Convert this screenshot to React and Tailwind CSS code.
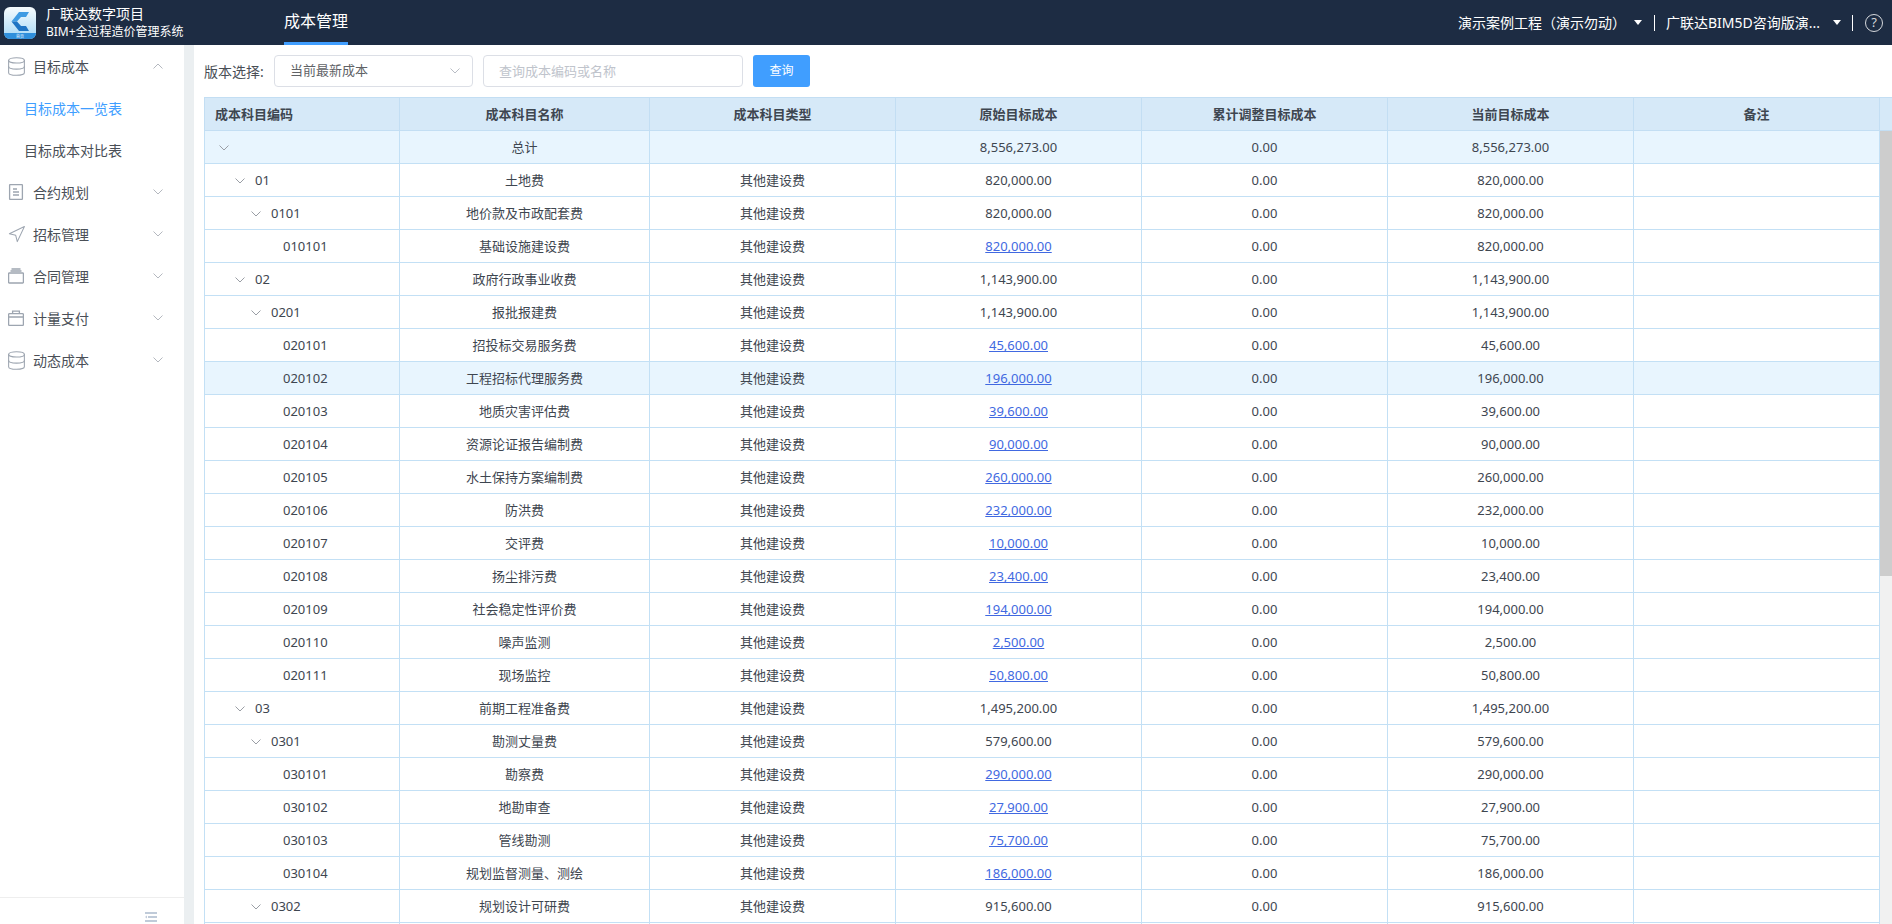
import React from 'react';
import { Database, Navigation } from 'lucide-react';

const rows = [
  { level: 0, code: '', name: '总计', type: '', orig: '8,556,273.00', parent: true },
  { level: 1, code: '01', name: '土地费', orig: '820,000.00', parent: true },
  { level: 2, code: '0101', name: '地价款及市政配套费', orig: '820,000.00', parent: true },
  { level: 3, code: '010101', name: '基础设施建设费', orig: '820,000.00', link: true },
  { level: 1, code: '02', name: '政府行政事业收费', orig: '1,143,900.00', parent: true },
  { level: 2, code: '0201', name: '报批报建费', orig: '1,143,900.00', parent: true },
  { level: 3, code: '020101', name: '招投标交易服务费', orig: '45,600.00', link: true },
  { level: 3, code: '020102', name: '工程招标代理服务费', orig: '196,000.00', link: true },
  { level: 3, code: '020103', name: '地质灾害评估费', orig: '39,600.00', link: true },
  { level: 3, code: '020104', name: '资源论证报告编制费', orig: '90,000.00', link: true },
  { level: 3, code: '020105', name: '水土保持方案编制费', orig: '260,000.00', link: true },
  { level: 3, code: '020106', name: '防洪费', orig: '232,000.00', link: true },
  { level: 3, code: '020107', name: '交评费', orig: '10,000.00', link: true },
  { level: 3, code: '020108', name: '扬尘排污费', orig: '23,400.00', link: true },
  { level: 3, code: '020109', name: '社会稳定性评价费', orig: '194,000.00', link: true },
  { level: 3, code: '020110', name: '噪声监测', orig: '2,500.00', link: true },
  { level: 3, code: '020111', name: '现场监控', orig: '50,800.00', link: true },
  { level: 1, code: '03', name: '前期工程准备费', orig: '1,495,200.00', parent: true },
  { level: 2, code: '0301', name: '勘测丈量费', orig: '579,600.00', parent: true },
  { level: 3, code: '030101', name: '勘察费', orig: '290,000.00', link: true },
  { level: 3, code: '030102', name: '地勘审查', orig: '27,900.00', link: true },
  { level: 3, code: '030103', name: '管线勘测', orig: '75,700.00', link: true },
  { level: 3, code: '030104', name: '规划监督测量、测绘', orig: '186,000.00', link: true },
  { level: 2, code: '0302', name: '规划设计可研费', orig: '915,600.00', parent: true },
];

const paddings = ['pl-[14px]', 'pl-[30px]', 'pl-[46px]', 'pl-[78px]'];

const Chevron = ({ up, className }) => (
  <svg width="10" height="6" viewBox="0 0 10 6" fill="none" className={className}>
    <path d={up ? 'M.5 5.5 5 1l4.5 4.5' : 'M.5.5 5 5 9.5.5'} stroke="currentColor" strokeWidth="1" />
  </svg>
);

const Caret = ({ className }) => (
  <span className={`block w-0 h-0 border-x-[4.5px] border-x-transparent border-t-[5px] border-t-white ${className}`} />
);

const DocIcon = () => (
  <svg width="16" height="16" viewBox="0 0 16 16" fill="none" stroke="#9da5b0" strokeWidth="1.3">
    <rect x="1.6" y=".6" width="12.8" height="14.8" rx=".6" />
    <path d="M5 5h4M5 8h6M5 11h6" />
  </svg>
);

const TrayIcon = () => (
  <svg width="16" height="16" viewBox="0 0 16 16" fill="none" stroke="#9da5b0" strokeWidth="1.3">
    <rect x=".6" y="5" width="14.8" height="10" rx=".6" />
    <path d="M2.5 3h11M3.5 1h9" />
  </svg>
);

const CaseIcon = () => (
  <svg width="16" height="16" viewBox="0 0 16 16" fill="none" stroke="#9da5b0" strokeWidth="1.3">
    <rect x=".6" y="3.6" width="14.8" height="11.8" rx="1" />
    <path d="M4.6 3.6V1.2h6.8v2.4M.6 7h14.8" />
  </svg>
);

const DbIcon = () => <Database size={21} color="#9da5b0" strokeWidth={1.2} className="shrink-0" />;
const PlaneIcon = () => <Navigation size={19} color="#9da5b0" strokeWidth={1.3} className="shrink-0" />;

const Logo = () => (
  <svg width="32" height="32" viewBox="0 0 32 32">
    <defs>
      <linearGradient id="logoBg" x1="0" y1="0" x2="0" y2="1">
        <stop offset="0" stopColor="#f6fbfe" />
        <stop offset="1" stopColor="#a6d8f6" />
      </linearGradient>
    </defs>
    <rect width="32" height="32" rx="6" fill="url(#logoBg)" />
    <path d="M0 26h32a6 6 0 0 1-6 6H6a6 6 0 0 1-6-6z" fill="#2f8fdc" />
    <path d="M25 5H15L7.5 14.5H13L17 10h5z" fill="#3f9be3" />
    <path d="M7.5 14.5 15 24h10l-3-5h-5l-4-4.500z" fill="#1f74c4" />
    <text x="16" y="30.500" textAnchor="middle" fontSize="4" fill="#e8f4fd">首页</text>
  </svg>
);

const MenuItem = ({ icon, label, open }) => (
  <div className="h-[42px] flex items-center pl-2 pr-[21px] text-[14px] text-[#4a4f57]">
    <span className="w-4 flex justify-center">{icon}</span>
    <span className="ml-[9px] flex-1">{label}</span>
    <Chevron up={open} className="text-[#b4b8bf]" />
  </div>
);

const SubItem = ({ label, active }) => (
  <div className={`h-[42px] flex items-center pl-6 text-[14px] ${active ? 'text-[#409eff]' : 'text-[#4a4f57]'}`}>
    {label}
  </div>
);

const Cols = ({ filler }) => (
  <colgroup>
    <col className="w-[196px]" />
    <col className="w-[250px]" />
    <col className="w-[246px]" />
    <col className="w-[246px]" />
    <col className="w-[246px]" />
    <col className="w-[246px]" />
    <col className="w-[246px]" />
    {filler && <col className="w-3" />}
  </colgroup>
);

const heads = ['成本科目名称', '成本科目类型', '原始目标成本', '累计调整目标成本', '当前目标成本', '备注'];

const App = () => {
  return (
    <div className="h-screen overflow-hidden flex flex-col bg-white font-['Noto_Sans','Noto_Sans_CJK_SC',sans-serif]">
      <header className="h-[45px] shrink-0 bg-[#1d2c43] flex items-stretch text-white">
        <div className="w-[284px] flex items-center pl-1">
          <Logo />
          <div className="ml-[10px] flex flex-col">
            <span className="text-[14px] leading-[18px]">广联达数字项目</span>
            <span className="text-[12px] leading-[18px]">BIM+全过程造价管理系统</span>
          </div>
        </div>
        <div className="w-16 flex items-center text-[16px] border-b-[3px] border-[#409eff]">成本管理</div>
        <div className="ml-auto flex items-center text-[14px] pr-[9px]">
          <span>演示案例工程（演示勿动）</span>
          <Caret className="ml-2" />
          <span className="ml-3 h-4 w-px bg-white" />
          <span className="ml-[11px]">广联达BIM5D咨询版演...</span>
          <Caret className="ml-[13px]" />
          <span className="ml-[11px] h-4 w-px bg-white" />
          <span className="ml-3 w-[18px] h-[18px] rounded-full border-[1.5px] border-[#d5d8dc] flex items-center justify-center text-[13px] leading-none text-[#d5d8dc]">?</span>
        </div>
      </header>

      <div className="flex-1 min-h-0 flex">
        <aside className="w-[184px] shrink-0 flex flex-col">
          <nav className="flex-1">
            <MenuItem icon={<DbIcon />} label="目标成本" open />
            <SubItem label="目标成本一览表" active />
            <SubItem label="目标成本对比表" />
            <MenuItem icon={<DocIcon />} label="合约规划" />
            <MenuItem icon={<PlaneIcon />} label="招标管理" />
            <MenuItem icon={<TrayIcon />} label="合同管理" />
            <MenuItem icon={<CaseIcon />} label="计量支付" />
            <MenuItem icon={<DbIcon />} label="动态成本" />
          </nav>
          <div className="h-[27px] border-t border-[#eeeeee] flex justify-end items-end pr-[27px] pb-[2px]">
            <svg width="12" height="10" viewBox="0 0 12 10" fill="#c0cbd9">
              <rect width="12" height="2" />
              <rect x="3" y="4" width="9" height="2" />
              <rect y="8" width="12" height="2" />
              <path d="M0 5l2-1.500v3z" />
            </svg>
          </div>
        </aside>
        <div className="w-[10px] shrink-0 bg-[#ebeff1]" />

        <main className="flex-1 min-w-0 flex flex-col pl-[10px]">
          <div className="h-[52px] shrink-0 pt-[10px] flex items-start text-[13px]">
            <span className="h-8 w-[70px] flex items-center text-[14px] text-[#4a4f57]">版本选择:</span>
            <div className="h-8 w-[199px] border border-[#dcdfe6] rounded flex items-center justify-between pl-[15px] pr-3 text-[#606266]">
              <span>当前最新成本</span>
              <Chevron className="text-[#b9bdc5]" />
            </div>
            <input
              type="text"
              placeholder="查询成本编码或名称"
              className="ml-[10px] h-8 w-[260px] border border-[#dcdfe6] rounded px-[15px] outline-none placeholder:text-[#c0c4cc]"
            />
            <button type="button" className="ml-[10px] h-8 w-[57px] rounded-[3px] bg-[#409eff] text-white text-[12px]">查询</button>
          </div>

          <table className="table-fixed w-[1688px] shrink-0 border-separate border-spacing-0 text-[13px] text-[#3e4650]">
            <Cols filler />
            <thead>
              <tr className="bg-[#d6e9f8]">
                <th className="h-[34px] p-0 pt-px pl-[10px] text-left font-semibold border-t border-b border-l border-r border-[#c3def3]">成本科目编码</th>
                {heads.map((head) => (
                  <th key={head} className="h-[34px] p-0 pt-px text-center font-semibold border-t border-b border-r border-[#c3def3]">{head}</th>
                ))}
                <th className="h-[34px] p-0 border-t border-b border-[#c3def3]" />
              </tr>
            </thead>
          </table>

          <div className="flex-1 min-h-0 flex overflow-hidden">
            <table className="table-fixed w-[1676px] h-fit shrink-0 border-separate border-spacing-0 text-[13px] text-[#3e4650]">
              <Cols />
              <tbody>
                {rows.map((row) => {
                  const cell = 'h-[33px] p-0 pt-[2px] text-center border-b border-r border-[#c3e0f5]';
                  const shaded = row.level === 0 || row.code === '020102';
                  return (
                    <tr key={row.code + row.name} className={shaded ? 'bg-[#e8f5fe]' : ''}>
                      <td className="h-[33px] p-0 pt-[2px] border-b border-l border-r border-[#c3e0f5]">
                        <div className={`flex items-center ${paddings[row.level]}`}>
                          {row.parent && <Chevron className="text-[#9a9ea5] mr-[10px]" />}
                          <span>{row.code}</span>
                        </div>
                      </td>
                      <td className={cell}>{row.name}</td>
                      <td className={cell}>{row.level === 0 ? '' : '其他建设费'}</td>
                      <td className={cell}>
                        {row.link ? <a href="#" className="text-[#4169e1] underline">{row.orig}</a> : row.orig}
                      </td>
                      <td className={cell}>0.00</td>
                      <td className={cell}>{row.orig}</td>
                      <td className={cell} />
                    </tr>
                  );
                })}
                <tr>
                  <td className="h-[33px] p-0 border-l border-r border-[#c3e0f5]" />
                  <td className="h-[33px] p-0 border-r border-[#c3e0f5]" />
                  <td className="h-[33px] p-0 border-r border-[#c3e0f5]" />
                  <td className="h-[33px] p-0 border-r border-[#c3e0f5]" />
                  <td className="h-[33px] p-0 border-r border-[#c3e0f5]" />
                  <td className="h-[33px] p-0 border-r border-[#c3e0f5]" />
                  <td className="h-[33px] p-0 border-r border-[#c3e0f5]" />
                </tr>
              </tbody>
            </table>
            <div className="w-3 shrink-0 bg-[#f1f1f1]">
              <div className="h-[445px] bg-[#cdcdcd]" />
            </div>
          </div>
        </main>
      </div>
    </div>
  );
};

export default App;
